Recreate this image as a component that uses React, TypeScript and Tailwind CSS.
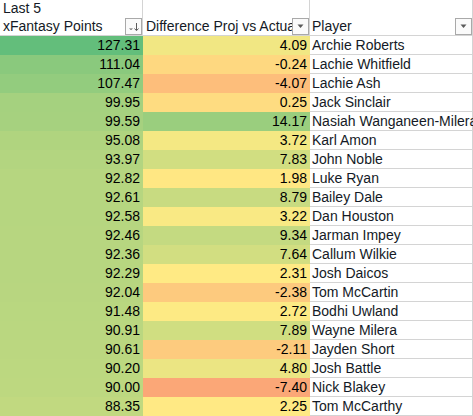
import React from 'react';

type Row = { pts: number; diff: number; player: string };

const rows: Row[] = [
  { pts: 127.31, diff: 4.09, player: 'Archie Roberts' },
  { pts: 111.04, diff: -0.24, player: 'Lachie Whitfield' },
  { pts: 107.47, diff: -4.07, player: 'Lachie Ash' },
  { pts: 99.95, diff: 0.25, player: 'Jack Sinclair' },
  { pts: 99.59, diff: 14.17, player: 'Nasiah Wanganeen-Milera' },
  { pts: 95.08, diff: 3.72, player: 'Karl Amon' },
  { pts: 93.97, diff: 7.83, player: 'John Noble' },
  { pts: 92.82, diff: 1.98, player: 'Luke Ryan' },
  { pts: 92.61, diff: 8.79, player: 'Bailey Dale' },
  { pts: 92.58, diff: 3.22, player: 'Dan Houston' },
  { pts: 92.46, diff: 9.34, player: 'Jarman Impey' },
  { pts: 92.36, diff: 7.64, player: 'Callum Wilkie' },
  { pts: 92.29, diff: 2.31, player: 'Josh Daicos' },
  { pts: 92.04, diff: -2.38, player: 'Tom McCartin' },
  { pts: 91.48, diff: 2.72, player: 'Bodhi Uwland' },
  { pts: 90.91, diff: 7.89, player: 'Wayne Milera' },
  { pts: 90.61, diff: -2.11, player: 'Jayden Short' },
  { pts: 90.2, diff: 4.8, player: 'Josh Battle' },
  { pts: 90.0, diff: -7.4, player: 'Nick Blakey' },
  { pts: 88.35, diff: 2.25, player: 'Tom McCarthy' },
];

// excel 3-colour scale
const GREEN = [0x63, 0xbe, 0x7b];
const YELLOW = [0xff, 0xeb, 0x84];
const RED = [0xf8, 0x69, 0x6b];

const clamp = (t: number) => Math.max(0, Math.min(1, t));

const mix = (a: number[], b: number[], t: number) =>
  'rgb(' + a.map((v, i) => Math.round(v + (b[i] - v) * clamp(t))).join(',') + ')';

const ptsColor = (v: number) => mix(YELLOW, GREEN, (v - 62.4) / (127.31 - 62.4));

const diffColor = (v: number) =>
  v >= 2.5 ? mix(YELLOW, GREEN, (v - 2.5) / 18) : mix(YELLOW, RED, (2.5 - v) / 19);

const FilterButton: React.FC<{ sorted?: boolean }> = ({ sorted }) => (
  <div className="absolute right-0 top-[1px] w-[17px] h-[17px] border border-[#a9a9a9] bg-[#fafafa]">
    <svg width="15" height="15" viewBox="0 0 15 15" className="block">
      {sorted ? (
        <>
          <path d="M3 9.5h4l-2 1.6z" fill="#5a5a5a" />
          <path d="M10.5 4v7" stroke="#5a5a5a" strokeWidth="1" />
          <path d="M8.5 9.5l2 2.2 2-2.2" stroke="#5a5a5a" strokeWidth="1" fill="none" />
        </>
      ) : (
        <path d="M4.5 5.5h6l-3 3.5z" fill="#5a5a5a" />
      )}
    </svg>
  </div>
);

const App: React.FC = () => {
  return (
    <div className="w-[473px] h-[416px] overflow-hidden bg-white text-[14px] text-[#141a26] font-['Liberation_Sans',Arial,sans-serif]">
      {/* title row */}
      <div className="flex h-[17px] leading-[17px]">
        <div className="w-[143px] shrink-0 border-r border-[#d4d4d4] pl-[3px] whitespace-nowrap">Last 5</div>
        <div className="w-[167px] shrink-0 border-r border-[#d4d4d4]" />
        <div className="w-[163px] shrink-0 border-r border-[#d4d4d4]" />
      </div>

      {/* header row */}
      <div className="flex h-[19px] leading-[18px]">
        <div className="relative w-[143px] shrink-0 border-r border-b border-[#d4d4d4] pl-[3px] whitespace-nowrap overflow-hidden">
          xFantasy Points
          <FilterButton sorted />
        </div>
        <div className="relative w-[167px] shrink-0 border-r border-b border-[#d4d4d4] pl-[3px] whitespace-nowrap overflow-hidden">
          Difference Proj vs Actual
          <FilterButton />
        </div>
        <div className="relative w-[163px] shrink-0 border-r border-b border-[#d4d4d4] pl-[2px] whitespace-nowrap overflow-hidden">
          Player
          <FilterButton />
        </div>
      </div>

      {/* data */}
      {rows.map((r) => (
        <div key={r.player} className="flex h-[19px] leading-[18px]">
          <div className="w-[143px] shrink-0 pr-[3px] text-right text-black" style={{ backgroundColor: ptsColor(r.pts) }}>
            {r.pts.toFixed(2)}
          </div>
          <div className="w-[167px] shrink-0 pr-[3px] text-right text-black" style={{ backgroundColor: diffColor(r.diff) }}>
            {r.diff.toFixed(2)}
          </div>
          <div className="w-[163px] shrink-0 border-r border-b border-[#d4d4d4] pl-[2px] whitespace-nowrap">
            {r.player}
          </div>
        </div>
      ))}
    </div>
  );
};

export default App;
